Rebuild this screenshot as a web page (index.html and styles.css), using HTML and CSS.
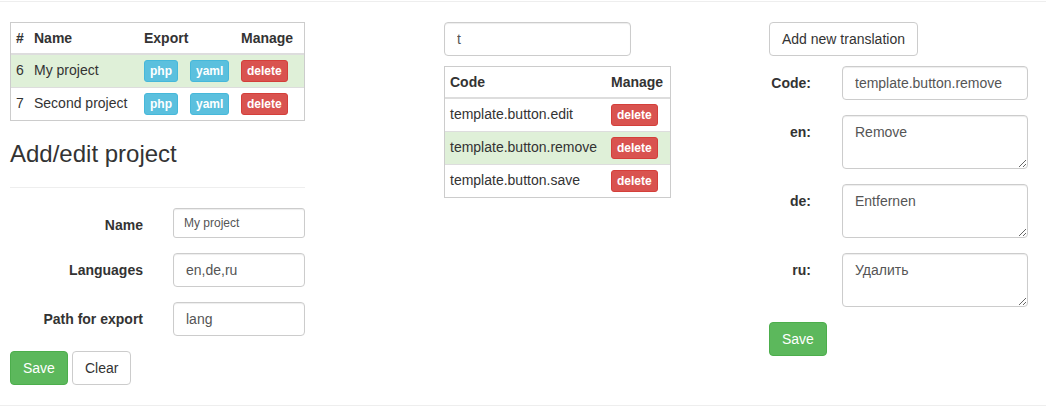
FILE: index.html
```html
<!DOCTYPE html>
<html>
<head>
<meta charset="utf-8">
<title>Translations</title>
<link rel="stylesheet" href="styles.css">
</head>
<body>
<div class="topline"></div>
<div class="page">
  <div class="col col-projects">
    <div class="tbl-wrap">
      <table class="tbl">
        <thead>
          <tr><th class="w-id">#</th><th class="w-name">Name</th><th class="w-export">Export</th><th class="w-manage">Manage</th></tr>
        </thead>
        <tbody>
          <tr class="success">
            <td>6</td><td>My project</td>
            <td><div class="btn-pair"><button class="btn btn-xs btn-info">php</button><button class="btn btn-xs btn-info">yaml</button></div></td>
            <td><button class="btn btn-xs btn-danger">delete</button></td>
          </tr>
          <tr>
            <td>7</td><td>Second project</td>
            <td><div class="btn-pair"><button class="btn btn-xs btn-info">php</button><button class="btn btn-xs btn-info">yaml</button></div></td>
            <td><button class="btn btn-xs btn-danger">delete</button></td>
          </tr>
        </tbody>
      </table>
    </div>
    <h3 class="title">Add/edit project</h3>
    <hr class="divider">
    <form class="hform">
      <div class="fg">
        <label>Name</label>
        <input class="form-control input-sm" value="My project">
      </div>
      <div class="fg">
        <label>Languages</label>
        <input class="form-control" value="en,de,ru">
      </div>
      <div class="fg">
        <label>Path for export</label>
        <input class="form-control" value="lang">
      </div>
      <div class="actions">
        <button type="button" class="btn btn-success">Save</button>
        <button type="button" class="btn btn-default">Clear</button>
      </div>
    </form>
  </div>

  <div class="col col-codes">
    <input class="form-control search" value="t">
    <div class="tbl-wrap">
      <table class="tbl">
        <thead>
          <tr><th class="w-code">Code</th><th class="w-cmanage">Manage</th></tr>
        </thead>
        <tbody>
          <tr><td>template.button.edit</td><td><button class="btn btn-xs btn-danger">delete</button></td></tr>
          <tr class="success"><td>template.button.remove</td><td><button class="btn btn-xs btn-danger">delete</button></td></tr>
          <tr><td>template.button.save</td><td><button class="btn btn-xs btn-danger">delete</button></td></tr>
        </tbody>
      </table>
    </div>
  </div>

  <div class="col col-trans">
    <button type="button" class="btn btn-default add-btn">Add new translation</button>
    <form class="tform">
      <div class="fg">
        <label>Code:</label>
        <input class="form-control" value="template.button.remove">
      </div>
      <div class="fg">
        <label>en:</label>
        <textarea class="form-control" rows="2">Remove</textarea>
      </div>
      <div class="fg">
        <label>de:</label>
        <textarea class="form-control" rows="2">Entfernen</textarea>
      </div>
      <div class="fg">
        <label>ru:</label>
        <textarea class="form-control" rows="2">Удалить</textarea>
      </div>
      <button type="button" class="btn btn-success">Save</button>
    </form>
  </div>
</div>
<div class="footline"></div>
</body>
</html>
```

FILE: styles.css
```css
* { box-sizing: border-box; }
html, body { margin: 0; padding: 0; }
body {
  width: 1046px;
  height: 409px;
  overflow: hidden;
  background: #fff;
  color: #333;
  font-family: "Liberation Sans", Arial, sans-serif;
  font-size: 14px;
  line-height: 20px;
}
.topline { height: 1px; margin-top: 1px; background: #eee; }
.footline { height: 1px; margin-top: 20px; background: #eee; }

.page { display: flex; align-items: flex-start; padding: 20px 0 0 10px; }
.col-projects { width: 295px; }
.col-codes { width: 227px; margin-left: 139px; }
.col-trans { width: 259px; margin-left: 98px; }

/* tables */
.tbl-wrap { border: 1px solid #ccc; }
.col-projects .tbl-wrap { margin-bottom: 20px; }
.tbl { width: 100%; border-collapse: collapse; table-layout: fixed; }
.tbl th, .tbl td { padding: 5px; text-align: left; vertical-align: top; line-height: 20px; white-space: nowrap; }
.tbl th { font-weight: bold; border-bottom: 2px solid #ddd; }
.tbl td { border-top: 1px solid #ddd; }
.tbl tr.success td { background: #dff0d8; }
.w-id { width: 18px; }
.w-name { width: 110px; }
.w-export { width: 97px; }
.w-manage { width: 68px; }
.w-code { width: 161px; }
.w-cmanage { width: 64px; }
.btn-pair { display: flex; gap: 12px; }

/* buttons */
.btn {
  display: inline-block;
  margin: 0;
  padding: 6px 12px;
  font-family: inherit;
  font-size: 14px;
  line-height: 20px;
  font-weight: normal;
  border: 1px solid #ccc;
  border-radius: 4px;
  background: #fff;
  color: #333;
  cursor: pointer;
  white-space: nowrap;
}
.btn-xs { padding: 1px 5px; font-size: 12px; line-height: 18px; border-radius: 3px; font-weight: bold; }
.btn-info { background: #5bc0de; border-color: #46b8da; color: #fff; }
.btn-danger { background: #d9534f; border-color: #d43f3a; color: #fff; }
.btn-success { background: #5cb85c; border-color: #4cae4c; color: #fff; }
.btn-default { background: #fff; border-color: #ccc; color: #333; }

/* headings */
.title { margin: 0 0 20px; font-size: 24px; line-height: 26px; font-weight: normal; }
.divider { margin: 0 0 20px; border: 0; border-top: 1px solid #eee; height: 0; }

/* inputs */
.form-control {
  display: block;
  width: 100%;
  height: 34px;
  margin: 0;
  padding: 6px 12px;
  font-family: inherit;
  font-size: 14px;
  line-height: 20px;
  color: #555;
  background: #fff;
  border: 1px solid #ccc;
  border-radius: 4px;
  box-shadow: inset 0 1px 1px rgba(0,0,0,.075);
}
.input-sm { height: 30px; padding: 5px 10px; font-size: 12px; line-height: 18px; border-radius: 3px; }
textarea.form-control { height: 54px; resize: vertical; }

.search { width: 187px; margin-bottom: 10px; }

/* left form */
.hform .fg { display: grid; grid-template-columns: 133px 132px; column-gap: 30px; margin-bottom: 15px; }
.hform label, .tform label { text-align: right; font-weight: bold; padding-top: 7px; }
.actions { display: flex; gap: 4px; }

/* right form */
.add-btn { margin-bottom: 10px; }
.tform .fg { display: grid; grid-template-columns: 42px 186px; column-gap: 31px; margin-bottom: 15px; }
```
